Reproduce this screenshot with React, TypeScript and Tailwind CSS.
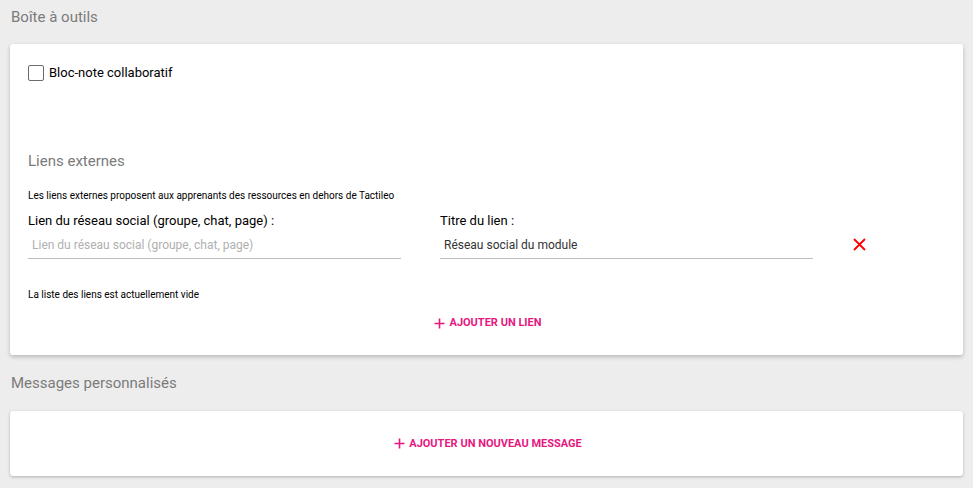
import React from "react";

const Plus = () => (
  <svg width="11" height="11" viewBox="0 0 11 11" className="shrink-0">
    <path d="M5.5 0.5V10.5M0.5 5.5H10.5" stroke="#e6177f" strokeWidth="1.6" />
  </svg>
);

export default function App() {
  return (
    <div className="min-h-[488px] bg-[#ededed] px-[10px] pt-[8px] pb-[12px] font-['Roboto',sans-serif]">
      <h2 className="pl-px text-[15px] leading-[18px] text-[#7b7b7b]">Boîte à outils</h2>
      <div className="mt-[18px] rounded-[3px] bg-white px-[18px] pt-[21px] pb-[25px] shadow-[0_2px_4px_rgba(0,0,0,0.22)]">
        <label className="flex items-center gap-[5px]">
          <span className="h-[16px] w-[16px] rounded-[2px] border border-[#6b6b6b] bg-white" />
          <span className="text-[13px] leading-[16px] text-black">Bloc-note collaboratif</span>
        </label>
        <h3 className="mt-[71px] text-[15px] leading-[18px] text-[#7b7b7b]">Liens externes</h3>
        <p className="mt-[20px] text-[10px] leading-[12px] text-black">
          Les liens externes proposent aux apprenants des ressources en dehors de Tactileo
        </p>
        <div className="mt-[11px] flex items-start gap-[39px]">
          <div className="w-[373px]">
            <div className="text-[13px] leading-[16px] text-black">Lien du réseau social (groupe, chat, page) :</div>
            <div className="mt-[9px] border-b border-[#bdbdbd] pb-[5px] pl-[4px] text-[12px] leading-[15px] text-[#b0b0b0]">
              Lien du réseau social (groupe, chat, page)
            </div>
          </div>
          <div className="w-[373px]">
            <div className="text-[13px] leading-[16px] text-black">Titre du lien :</div>
            <div className="mt-[9px] border-b border-[#bdbdbd] pb-[5px] pl-[4px] text-[12px] leading-[15px] text-[#333]">
              Réseau social du module
            </div>
          </div>
          <div className="ml-[1px] mt-[25px]">
            <svg width="13" height="13" viewBox="0 0 13 13">
              <path d="M1 1L12 12M12 1L1 12" stroke="#f00" strokeWidth="1.8" />
            </svg>
          </div>
        </div>
        <p className="mt-[30px] text-[10px] leading-[12px] text-black">La liste des liens est actuellement vide</p>
        <div className="mt-[15px] flex justify-center pl-[3px]">
          <button className="flex items-center gap-[4px] text-[11px] font-bold uppercase leading-[14px] text-[#e6177f]">
            <Plus />
            Ajouter un lien
          </button>
        </div>
      </div>
      <h2 className="mt-[19px] pl-px text-[15px] leading-[18px] text-[#7b7b7b]">Messages personnalisés</h2>
      <div className="mt-[19px] flex h-[65px] items-center justify-center rounded-[3px] bg-white shadow-[0_1px_3px_rgba(0,0,0,0.25)]">
        <button className="flex items-center gap-[4px] pl-[3px] text-[11px] font-bold uppercase leading-[14px] text-[#e6177f]">
          <Plus />
          Ajouter un nouveau message
        </button>
      </div>
    </div>
  );
}
